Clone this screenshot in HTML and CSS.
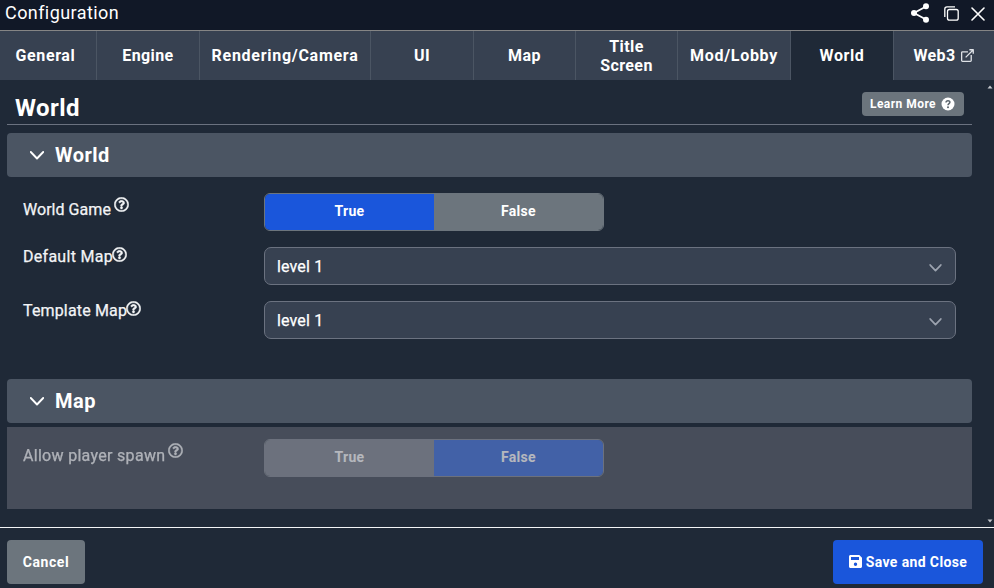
FILE: index.html
```html
<!DOCTYPE html>
<html lang="en">
<head>
<meta charset="utf-8">
<title>Configuration</title>
<link rel="stylesheet" href="styles.css">
</head>
<body>
<svg class="defs" width="0" height="0" aria-hidden="true">
  <symbol id="help" viewBox="0 0 512 512"><path fill="currentColor" stroke="currentColor" stroke-width="14" d="M256 8C119 8 8 119 8 256s111 248 248 248 248-111 248-248S393 8 256 8zm0 448c-110.500 0-200-89.400-200-200 0-110.500 89.500-200 200-200 110.500 0 200 89.500 200 200 0 110.500-89.400 200-200 200zm107.200-255.200c0 67.100-72.400 68.100-72.400 92.900V300c0 6.600-5.400 12-12 12h-45.600c-6.600 0-12-5.400-12-12v-8.700c0-35.700 27.100-50 47.600-61.500 17.600-9.800 28.300-16.500 28.300-29.500 0-17.200-22-28.700-39.800-28.700-23.200 0-33.900 11-48.900 30-4.100 5.100-11.500 6.100-16.700 2.100l-27.800-21.100c-5.100-3.900-6.300-11.100-2.600-16.400C184.800 131.500 214.900 112 261.800 112c49.100 0 101.500 38.300 101.500 88.800zM298 368c0 23.200-18.800 42-42 42s-42-18.800-42-42 18.800-42 42-42 42 18.800 42 42z"/></symbol>
  <symbol id="chevron" viewBox="0 0 14 9"><path d="M.8 1l6.200 6.500L13.200 1" fill="none" stroke="currentColor" stroke-width="1.900" stroke-linecap="round" stroke-linejoin="round"/></symbol>
</svg>
<div class="window">
  <header class="titlebar">
    <span class="title">Configuration</span>
    <div class="tools">
      <svg class="share" width="20" height="20" viewBox="0 0 20 20" fill="#fff"><path d="M16 3.500L4 10l12 6.500" fill="none" stroke="#fff" stroke-width="1.800"/><circle cx="16" cy="3.300" r="3"/><circle cx="4" cy="10" r="3"/><circle cx="16" cy="16.700" r="3"/></svg>
      <svg class="copy" width="15" height="15" viewBox="0 0 15 15" fill="none" stroke="#fff" stroke-width="1.300"><rect x="3.500" y="3.500" width="10.700" height="10.700" rx="2"/><path d="M.8 11V3A2.200 2.200 0 013 .8h8"/></svg>
      <svg class="close" width="14" height="14" viewBox="0 0 14 14" stroke="#fff" stroke-width="1.600" stroke-linecap="round"><path d="M1 1l12 12M13 1L1 13"/></svg>
    </div>
  </header>
  <nav class="tabs">
    <div class="tab first"><span class="t-general">General</span></div>
    <div class="tab"><span>Engine</span></div>
    <div class="tab"><span class="t-render">Rendering/Camera</span></div>
    <div class="tab"><span>UI</span></div>
    <div class="tab"><span>Map</span></div>
    <div class="tab"><span>Title<br>Screen</span></div>
    <div class="tab"><span class="t-lobby">Mod/Lobby</span></div>
    <div class="tab active"><span>World</span></div>
    <div class="tab last"><span>Web3</span><svg width="13" height="13" viewBox="0 0 14 14" fill="none" stroke="#dfe2e7" stroke-width="1.400" stroke-linejoin="round"><path d="M7.500 3H1.600a.9.9 0 00-.9.900v8.500c0 .5.400.900.900.900h8.500c.5 0 .9-.4.900-.9V6.500M9 .8h4.200V5M13 1L5 9"/></svg></div>
  </nav>
  <main class="body">
    <div class="content">
      <div class="page-head">
        <h1>World</h1>
        <div class="learn"><span>Learn More</span><svg width="14" height="14" viewBox="0 0 14 14"><circle cx="7" cy="7" r="6.500" fill="#fff"/><path d="M5 5.500C5.100 3 9 3.100 8.900 5.300 8.800 6.700 7 6.600 7 8.300" fill="none" stroke="#5b646d" stroke-width="1.500"/><circle cx="7" cy="10.300" r="1" fill="#5b646d"/></svg></div>
      </div>
      <section>
        <div class="bar"><svg width="14" height="9"><use href="#chevron"/></svg><h2>World</h2></div>
        <div class="fields">
          <div class="row">
            <div class="label"><span class="l-game">World Game</span><svg class="gap" width="15" height="15"><use href="#help"/></svg></div>
            <div class="toggle"><div class="on">True</div><div class="off">False</div></div>
          </div>
          <div class="row">
            <div class="label up"><span class="l-default">Default Map</span><svg width="15" height="15"><use href="#help"/></svg></div>
            <div class="select"><span>level 1</span><svg width="13" height="8" viewBox="0 0 14 9"><use href="#chevron"/></svg></div>
          </div>
          <div class="row">
            <div class="label up"><span class="l-template">Template Map</span><svg width="15" height="15"><use href="#help"/></svg></div>
            <div class="select"><span>level 1</span><svg width="13" height="8" viewBox="0 0 14 9"><use href="#chevron"/></svg></div>
          </div>
        </div>
      </section>
      <section>
        <div class="bar"><svg width="14" height="9"><use href="#chevron"/></svg><h2>Map</h2></div>
        <div class="disabled">
          <div class="row">
            <div class="label"><span class="l-spawn">Allow player spawn</span><svg class="gap" width="15" height="15"><use href="#help"/></svg></div>
            <div class="toggle"><div class="off">True</div><div class="on">False</div></div>
          </div>
        </div>
      </section>
    </div>
    <div class="scroll">
      <svg width="6" height="4"><path d="M0.500 3.500L3 .5l2.500 3z" fill="#c4c7cc"/></svg>
      <svg width="6" height="4"><path d="M.5 .5l2.500 3 2.500-3z" fill="#c4c7cc"/></svg>
    </div>
  </main>
  <footer class="footer">
    <div class="btn cancel"><span>Cancel</span></div>
    <div class="btn save"><svg width="13" height="13" viewBox="0 0 13 13"><path fill="#fff" fill-rule="evenodd" d="M1.500 0h8.800L13 2.700v8.800c0 .8-.7 1.500-1.500 1.500h-10C.7 13 0 12.300 0 11.500v-10C0 .7.7 0 1.500 0zM2 2v3h8V2zM6.500 7.600a1.700 1.700 0 100 3.400 1.700 1.700 0 000-3.400z"/></svg><span>Save and Close</span></div>
  </footer>
</div>
</body>
</html>
```
FILE: styles.css
```css
* { box-sizing: border-box; }
body { margin: 0; background: #1f2937; color: #fff; font-family: Roboto, "Liberation Sans", sans-serif; font-size: 16px; overflow: hidden; }
svg { display: block; flex: none; }
.defs { position: absolute; }
h1, h2 { margin: 0; font-weight: 700; }
span, h1, h2 { white-space: nowrap; }
.window { width: 994px; height: 588px; display: flex; flex-direction: column; }
.titlebar { height: 31px; background: #111827; border-bottom: 1px solid #858585; display: flex; justify-content: space-between; padding: 0 9px 0 5px; }
.title { font-size: 18px; line-height: 26px; letter-spacing: .42px; }
.tools { display: flex; align-items: flex-start; }
.share { margin: 3px 14px 0 0; }
.copy { margin: 6px 12px 0 0; }
.close { margin-top: 7px; }
.tabs { height: 49px; display: grid; grid-template-columns: 97px 103px 171px 103px 102px 102px 113px 103px 1fr; }
.tab { display: flex; align-items: center; justify-content: center; gap: 5px; text-align: center; background: #374151; border-right: 1px solid #4b5563; font-weight: 700; line-height: 19px; letter-spacing: .4px; }
.t-general { letter-spacing: .6px; }
.t-render { letter-spacing: .72px; }
.t-lobby { letter-spacing: .7px; }
.tab.first { padding-right: 5px; }
.tab.last { border: 0; padding-right: 1px; }
.tab.active { background: #1f2937; }
.active span { letter-spacing: .6px; }
.body { height: 447px; display: flex; padding-left: 7px; }
.content { width: 965px; }
.page-head { height: 45px; border-bottom: 1px solid #6b7280; display: flex; justify-content: space-between; padding: 12px 8px 0; }
h1 { font-size: 24px; line-height: 32px; letter-spacing: .4px; }
.learn { width: 102px; height: 24px; border-radius: 4px; background: #6c757d; display: flex; align-items: center; gap: 4px; padding-left: 8px; font-size: 12px; font-weight: 700; letter-spacing: .45px; }
.learn span { width: 67px; }
.bar { margin-top: 8px; height: 44px; border-radius: 4px; background: #4b5563; display: flex; align-items: center; padding-left: 23px; gap: 11px; }
h2 { font-size: 20px; line-height: 28px; letter-spacing: .5px; }
.fields { height: 194px; padding: 16px 16px 0; display: flex; flex-direction: column; gap: 16px; }
.row { display: flex; height: 38px; }
.label { width: 241px; display: flex; align-items: flex-start; padding-top: 4px; color: #f3f4f6; }
.label span { line-height: 25px; -webkit-text-stroke: .25px currentColor; }
.label.up { padding-top: 0; }
.label.up span { line-height: 19px; }
.label .l-game { letter-spacing: .04px; }
.label .l-default { letter-spacing: .28px; }
.label .l-template { letter-spacing: .15px; }
.label .l-spawn { letter-spacing: .3px; }
.label svg { margin-left: -1px; }
.label svg.gap { margin-left: 3px; }
.toggle { width: 340px; border: 1px solid #6c757d; border-radius: 6px; overflow: hidden; display: flex; font-size: 14px; font-weight: 700; line-height: 34px; text-align: center; letter-spacing: .3px; }
.toggle div { flex: 1; }
.on { background: #1a56db; }
.off { background: #6c757d; }
.select { width: 692px; border: 1px solid #6b7280; border-radius: 7px; background: #374151; display: flex; align-items: center; justify-content: space-between; padding: 0 13px 0 12px; letter-spacing: .15px; }
.select span { -webkit-text-stroke: .25px currentColor; }
.select svg { color: #9ca3af; margin-top: 3px; }
.disabled { margin-top: 4px; height: 82px; padding: 12px 16px; background: #474d5a; }
.disabled .row { opacity: .6; }
.disabled .toggle { border-color: #858b94; }
.disabled .off { background: #858b94; }
.disabled .on { background: #4071db; }
.scroll { margin-left: auto; width: 8px; display: flex; flex-direction: column; justify-content: space-between; padding: 5px 1px 4px; }
.footer { flex: 1; border-top: 1px solid #f3f4f6; display: flex; justify-content: space-between; padding: 12px 11px 4px 7px; }
.btn { height: 44px; border-radius: 4px; display: flex; align-items: center; justify-content: center; font-size: 14px; font-weight: 700; line-height: 16px; padding-bottom: 1px; }
.cancel { width: 78px; background: #6c757d; letter-spacing: .55px; }
.save { width: 150px; background: #1a56db; gap: 4px; letter-spacing: .38px; }
```
